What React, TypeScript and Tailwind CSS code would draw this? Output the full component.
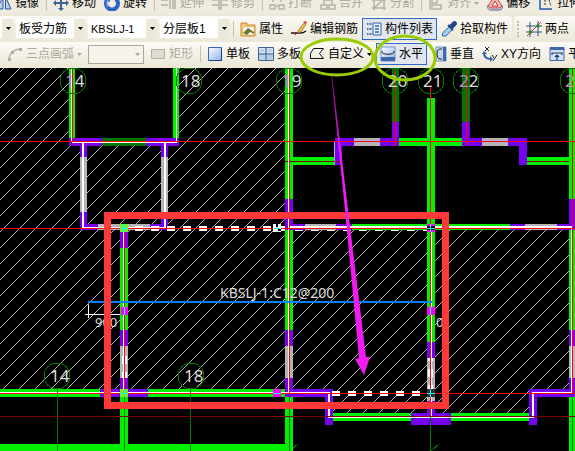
import type { ReactNode } from "react";

const FONT = "font-['Liberation_Sans','Noto_Sans_CJK_SC',sans-serif]";

function Icon({ children }: { children: ReactNode }) {
  return (
    <svg className="size-4 shrink-0" viewBox="0 0 16 16" fill="none" aria-hidden="true">
      {children}
    </svg>
  );
}

function Caret({ muted }: { muted?: boolean }) {
  return (
    <svg className="h-[3px] w-[5px] shrink-0" viewBox="0 0 5 3" aria-hidden="true">
      <path d="M0 0h5L2.5 3z" fill={muted ? "#aca899" : "#000"} />
    </svg>
  );
}

type ToolProps = {
  icon: ReactNode;
  label: string;
  disabled?: boolean;
  pressed?: boolean;
  menu?: boolean;
};

function Tool({ icon, label, disabled, pressed, menu }: ToolProps) {
  return (
    <button
      type="button"
      disabled={disabled}
      aria-pressed={pressed}
      className={`flex h-[22px] shrink-0 items-center gap-[3px] px-1 whitespace-nowrap ${
        pressed ? "bg-[#e1e6ee] outline outline-[#316ac5] -outline-offset-1" : ""
      } ${disabled ? "text-[#aca899]" : "text-black"}`}
    >
      <Icon>{icon}</Icon>
      <span>{label}</span>
      {menu && <Caret muted={disabled} />}
    </button>
  );
}

function Separator() {
  return (
    <div className="flex w-[6px] shrink-0 justify-center">
      <div className="h-4 w-px bg-[#c5c2b2]" />
    </div>
  );
}

type ComboProps = { label: string; value: string; narrow?: boolean; latin?: boolean };

function Combo({ label, value, narrow, latin }: ComboProps) {
  return (
    <div className={`relative h-[19px] shrink-0 ${narrow ? "w-4" : "w-[70px]"}`}>
      <select
        aria-label={label}
        defaultValue={value}
        className={`block h-full w-full appearance-none bg-white px-[3px] leading-[18px] text-black ${
          latin ? "text-[11px]" : "text-[12px]"
        }`}
      >
        <option>{value}</option>
      </select>
      <span className="pointer-events-none absolute inset-y-0 right-0 flex w-3 items-center justify-center bg-[#ece9d8]">
        <Caret />
      </span>
    </div>
  );
}

const BAR = "bg-linear-to-b from-[#fbfaf6] to-[#ece8d8]";

const icons = {
  mirror: (
    <>
      <path d="M7 2v12H1zM9.500 2v12H15z" fill="#b9d2f2" stroke="#28549c" />
    </>
  ),
  move: (
    <path
      d="M8 0l3 3H9v4h4V5l3 3-3 3V9H9v4h2l-3 3-3-3h2V9H3v2L0 8l3-3v2h4V3H5z"
      fill="#3d6392"
    />
  ),
  rotate: (
    <>
      <path d="M4 4a6 6 0 1 0 8 0" stroke="#2c62c4" strokeWidth="4" />
      <path d="M5 4.500a5 5 0 0 0-1 7" stroke="#8db8f3" strokeWidth="1.500" />
      <path d="M6 0v7L1 3z" fill="#2c62c4" />
    </>
  ),
  extend: <path d="M0 5h7M0 10h7M9 3v11M12 2v12M14 2v12" stroke="#b5b2a4" strokeWidth="1.500" />,
  trim: <path d="M0 5h6M0 10h6M10 5h6M10 10h6M7 1v14M9 1v14" stroke="#b5b2a4" strokeWidth="1.500" />,
  split: <path d="M4 7V4h3M12 7V4H9M1 10h5v4H1zM10 10h5v4h-5zM7 11h2" stroke="#b5b2a4" strokeWidth="1.500" />,
  merge: <path d="M4 9V5h8v4M1 10h6v4H1zM9 10h6v4H9z" stroke="#b5b2a4" strokeWidth="1.500" />,
  cut: <path d="M1 5h14M1 13h14M3 3v12M13 3v12M3 13L14 3" stroke="#b5b2a4" strokeWidth="1.500" />,
  align: <path d="M2 1v14M4 3h5v5H4zM4 10h9v4H4z" stroke="#b5b2a4" strokeWidth="1.500" />,
  offset: (
    <>
      <path d="M8 2c3 0 3 4 5 6s2 5-1 5H4c-3 0-3-3-1-5s2-6 5-6z" fill="#f4b6b0" stroke="#c33b32" />
      <path d="M8 6l3 5H5z" fill="#fff" stroke="#c33b32" />
      <path d="M1 10c-1 4 1 5 3 5h8c3 0 4-2 3-5" stroke="#2e62a8" />
    </>
  ),
  stretch: (
    <>
      <path d="M2 0v14h12" stroke="#2458a8" strokeWidth="1.500" />
      <path d="M7 5v5M10 2l3 9" stroke="#333" strokeDasharray="2 1" />
    </>
  ),
  props: (
    <>
      <path d="M1 2h6v2h8v11H1z" fill="#f6c976" stroke="#cf8b32" />
      <path d="M3 6h11v8H3z" fill="#fff" stroke="#c9a96a" strokeWidth=".5" />
      <path d="M3 12l5-5 6 4v2l-4-2-3 3z" fill="#6c7a2c" />
    </>
  ),
  pencil: (
    <>
      <path d="M0 12h7c3 0 4 1 8-2" stroke="#111" strokeWidth="1.500" />
      <path d="M7 10l6-8 2 1-5 8-3 1z" fill="#f0bd45" stroke="#9a6a1c" strokeWidth=".7" />
      <path d="M12 1l3 2 1-2-2-1z" fill="#d24a3a" />
      <path d="M1 11l4 3" stroke="#b33" />
    </>
  ),
  list: (
    <>
      <path d="M7 2h8v12H7z" fill="#e8f0fb" stroke="#3464ac" />
      <path d="M9 5h4M9 8h4M9 11h4" stroke="#3464ac" strokeWidth="1.500" />
      <path d="M1 3h3M1 8h3M1 13h3M4 3h2M4 8h2M4 13h2" stroke="#55719c" strokeWidth="2" strokeDasharray="1.500 1" />
    </>
  ),
  dropper: (
    <>
      <path d="M9 5l3 3-7 7H1.500v-3z" fill="#9fd0f5" stroke="#3d6fae" />
      <path d="M7 4l5 5M9 5l3-3c2-2 4 0 2 2l-3 3z" fill="#23467f" stroke="#23467f" strokeWidth="2" />
    </>
  ),
  twoPoint: (
    <>
      <path d="M4 1v15M12 0v15M0 5h16M0 11h16" stroke="#33557f" />
      <path d="M1 15L15 1" stroke="#d03030" />
      <circle cx="4.500" cy="11" r="1.800" fill="#2d8a2d" />
      <circle cx="12" cy="5" r="1.800" fill="#2d8a2d" />
    </>
  ),
  arc: (
    <>
      <path d="M2 14C2 7 7 3 14 3" stroke="#bab7aa" strokeWidth="1.500" />
      <path d="M1 12h3v3H1zM4 5h3v3H4zM12 2h3v3h-3z" fill="#b0ad9f" />
    </>
  ),
  rect: <path d="M1.500 3.500h13v9h-13z" fill="#dddbd2" stroke="#b5b2a4" />,
  slab: (
    <>
      <path d="M1.500 1.500h13v13h-13z" fill="url(#slabFill)" stroke="#3268bc" />
      <path d="M2 14.500h12.500V2" stroke="#1b3f86" />
    </>
  ),
  multi: (
    <>
      <path d="M.5 1.500h15v13H.5z" fill="#b8cfea" stroke="#41648f" />
      <path d="M8 1v14M0 8h16" stroke="#41648f" />
      <path d="M1.500 2.500h5v4h-5zM9.500 2.500h5v4h-5z" stroke="#dbe8f8" />
    </>
  ),
  custom: <path d="M4.500 2.500h10L10.500 7.500l4 5h-13v-5z" stroke="#111" />,
  horizontal: (
    <>
      <path d="M1 1h14v14H1z" fill="url(#slabFill)" stroke="#7396c6" />
      <path d="M1 11h14v4H1z" fill="#3f68a8" />
      <path d="M2 5v1c0 3 12 3 12 0V5" stroke="#222" />
    </>
  ),
  vertical: (
    <>
      <path d="M5 1h10v14H5z" fill="#c4d6f0" stroke="#7396c6" />
      <path d="M12 1h3v14h-3z" fill="#3f68a8" />
      <path d="M11 3H9c-4 0-4 10 0 10h2" stroke="#222" />
    </>
  ),
  xy: (
    <>
      <path d="M3 1l4 4M7 1L3 5M10 9l2 3M15 9l-4 6" stroke="#222" />
      <path d="M2 7c0 4 3 6 7 6" stroke="#2c62b4" strokeWidth="2" />
      <path d="M0 8l2-3 3 3zM8 10l3 3-3 3z" fill="#2c62b4" />
    </>
  ),
  parallel: (
    <>
      <path d="M1 1.500h14v13H1z" fill="#d6e3f6" stroke="#3f68a8" />
      <path d="M1 1h14v3H1z" fill="#3f68a8" />
      <path d="M3 9V7h10v2M8 14V9M6 11l2-2 2 2" stroke="#1d3d7a" strokeWidth="1.200" />
    </>
  ),
};

const GREEN = "#00f000";
const DARK = "#007800";
const PURPLE = "#7800f0";
const GRAY = "#b4b4b4";
const WHITE = "#ffffff";
const RED = "#ff0000";
const MAROON = "#800000";
const MAGENTA = "#ff00ff";
const CYAN = "#00ffff";

// x, y, width, height, fill
type Bar = [number, number, number, number, string];

const walls: Bar[] = [
  // stair shaft, upper left
  [69, 68, 6, 70, GREEN], [173, 68, 6, 70, GREEN],
  [69, 138, 110, 8, PURPLE], [102, 138, 44, 8, DARK],
  [71, 68, 1, 74, WHITE], [176, 68, 1, 74, WHITE], [72, 68, 1, 77, RED],
  [80, 146, 7, 11, PURPLE], [80, 157, 7, 55, GRAY], [80, 212, 7, 18, PURPLE],
  [161, 146, 7, 11, PURPLE], [161, 157, 7, 55, GRAY], [161, 212, 7, 18, PURPLE],
  [80, 224, 18, 6, PURPLE], [98, 224, 52, 6, GRAY], [150, 224, 18, 6, PURPLE],
  [72, 142, 105, 1, WHITE], [82, 142, 2, 86, WHITE], [164, 142, 2, 86, WHITE],
  [82, 227, 84, 1, WHITE],
  // long horizontal run, right half
  [285, 224, 20, 6, PURPLE], [305, 224, 31, 6, GRAY], [336, 224, 16, 6, PURPLE],
  [352, 224, 158, 6, GREEN], [510, 224, 15, 6, PURPLE], [525, 224, 32, 6, GRAY],
  [557, 224, 18, 6, PURPLE],
  // axis 19
  [285, 68, 8, 131, GREEN], [285, 199, 8, 31, PURPLE], [285, 230, 8, 100, GREEN],
  [285, 330, 8, 16, PURPLE], [285, 346, 8, 32, GRAY], [285, 378, 8, 18, PURPLE],
  [285, 397, 8, 54, GREEN], [289, 397, 1, 54, DARK],
  // upper right rooms
  [293, 157, 42, 8, GREEN], [335, 138, 7, 27, PURPLE], [334, 142, 1, 23, GRAY],
  [335, 138, 19, 8, PURPLE], [354, 138, 26, 8, GRAY], [380, 138, 19, 8, PURPLE],
  [399, 138, 63, 8, GREEN], [462, 138, 20, 8, PURPLE], [482, 138, 26, 8, GRAY],
  [508, 138, 19, 8, PURPLE], [519, 138, 8, 27, PURPLE], [527, 157, 42, 8, GREEN],
  [392, 68, 7, 54, DARK], [392, 122, 7, 24, PURPLE], [395, 68, 1, 78, RED],
  [462, 68, 8, 54, DARK], [462, 122, 8, 24, PURPLE], [466, 68, 1, 78, RED],
  [285, 161, 57, 1, MAROON], [527, 161, 48, 1, MAROON],
  // right edge
  [569, 68, 6, 131, GREEN], [569, 199, 6, 31, PURPLE], [569, 230, 6, 100, GREEN],
  [569, 330, 6, 16, PURPLE], [569, 346, 6, 32, GRAY], [569, 378, 6, 18, PURPLE],
  [569, 397, 6, 54, GREEN], [572, 397, 1, 54, DARK],
  // axis 21
  [427, 98, 8, 244, GREEN], [427, 342, 8, 16, PURPLE], [427, 358, 8, 43, GRAY],
  [427, 401, 8, 12, PURPLE],
  [288, 226, 284, 2, WHITE],
  // selected wall, left side
  [120, 232, 8, 16, PURPLE], [120, 248, 8, 82, GREEN], [120, 330, 8, 16, PURPLE],
  [120, 346, 8, 32, GRAY], [122, 356, 5, 8, WHITE], [122, 372, 5, 6, WHITE],
  [120, 378, 8, 12, PURPLE], [120, 397, 8, 54, GREEN], [124, 397, 1, 54, DARK],
  // lower run
  [0, 389, 100, 8, GREEN], [100, 389, 48, 8, PURPLE], [148, 389, 137, 8, GREEN],
  [285, 389, 48, 8, PURPLE], [325, 389, 8, 36, PURPLE], [333, 413, 78, 8, GREEN],
  [411, 413, 40, 12, PURPLE], [427, 409, 8, 4, PURPLE],
  [451, 413, 78, 8, GREEN], [529, 389, 8, 36, PURPLE],
  [529, 389, 46, 8, PURPLE],
  [0, 392, 329, 1, WHITE], [328, 392, 2, 26, WHITE], [328, 417, 206, 1, WHITE],
  [532, 392, 2, 26, WHITE], [532, 392, 40, 1, WHITE],
  [0, 444, 285, 7, GREEN], [124, 444, 1, 7, DARK],
  [57, 389, 1, 62, DARK], [190, 389, 1, 62, DARK],
  // wall centre lines
  [288, 68, 1, 325, WHITE], [289, 68, 1, 325, RED],
  [571, 228, 1, 165, WHITE], [572, 68, 1, 325, RED],
  [123, 228, 1, 162, WHITE], [124, 228, 1, 162, RED],
  [428, 358, 5, 3, WHITE], [428, 369, 5, 8, WHITE], [428, 385, 5, 4, WHITE],
  [431, 232, 1, 185, WHITE], [430, 86, 1, 330, RED], [430, 417, 1, 34, DARK],
  // reference axes
  [0, 141, 575, 1, RED], [0, 228, 575, 1, RED], [0, 393, 575, 1, RED],
  [0, 416, 575, 1, MAROON],
  // grips
  [120, 224, 8, 8, "#80f000"], [123, 224, 2, 8, CYAN], [120, 228, 8, 1, CYAN],
  [121, 307, 7, 8, MAGENTA], [124, 307, 1, 8, CYAN],
  [120, 389, 8, 8, "#80f000"], [124, 389, 1, 8, CYAN], [120, 393, 8, 1, CYAN],
  [273, 389, 8, 8, MAGENTA], [273, 393, 8, 1, CYAN],
  [427, 224, 8, 8, MAGENTA], [427, 226, 8, 4, "#000"], [430, 224, 1, 8, CYAN], [427, 228, 8, 1, CYAN],
  [427, 307, 8, 8, MAGENTA], [430, 307, 1, 8, CYAN],
  [427, 389, 8, 8, "#303030"], [430, 389, 1, 8, CYAN], [427, 393, 8, 1, CYAN],
  // rebar line
  [88, 301, 344, 2, "#0080ff"], [88, 303, 1, 2, "#ff8000"], [88, 305, 1, 13, WHITE],
  [85, 314, 35, 1, WHITE],
];

const midGrip: Bar[] = [
  [273, 224, 8, 8, WHITE], [276, 224, 2, 3, "#000"], [274, 228, 6, 1, CYAN], [278, 229, 3, 2, "#000"],
];

// label, circle centre x, circle centre y, text x, first digit lies on a wall
const axes: [string, number, number, number, boolean][] = [
  ["14", 73, 81, 65, true], ["18", 189, 81, 181, false], ["19", 289, 81, 282, true],
  ["20", 395, 81, 388, false], ["21", 431, 81, 423, false], ["22", 466, 81, 459, true],
  ["2", 573, 81, 565, true], ["14", 57, 376, 50, false], ["18", 191, 376, 184, false],
];

const hatchCells = Array.from({ length: 16 }, (_, i) => [i, (23 - i) % 16]);
const topDashes = Array.from({ length: 19 }, (_, i) => 135 + i * 16);
const lowDashes = Array.from({ length: 6 }, (_, i) => 332 + i * 16);

function Drawing() {
  return (
    <svg
      className="block min-h-0 w-full grow basis-[383px] bg-black font-['Noto_Sans',sans-serif]"
      viewBox="0 68 575 383"
      preserveAspectRatio="xMinYMin slice"
      role="img"
      aria-label="板受力筋平面图"
    >
      <defs>
        <pattern id="hatch" width="16" height="16" patternUnits="userSpaceOnUse">
          {hatchCells.map(([x, y]) => (
            <rect key={x} x={x} y={y} width="1" height="1" fill="#b8b8b8" />
          ))}
        </pattern>
      </defs>
      <g shapeRendering="crispEdges">
        <path d="M0 68H72V142H176V68H289V228H575V390H533V414H333V390H0z" fill="url(#hatch)" />
        <path d="M124 451l7-7M290 451l8-7M431 451l8-7" stroke={DARK} />
        {topDashes.map((x) => (
          <rect key={x} x={x} y="226" width="8" height="5" fill={WHITE} />
        ))}
        {walls.map(([x, y, width, height, fill], i) => (
          <rect key={i} x={x} y={y} width={width} height={height} fill={fill} />
        ))}
        {topDashes.slice(0, 9).map((x) => (
          <path key={x} d={`M${x} 226h8v2h-8zM${x} 229h8v2h-8z`} fill={WHITE} />
        ))}
        {midGrip.map(([x, y, width, height, fill], i) => (
          <rect key={i} x={x} y={y} width={width} height={height} fill={fill} />
        ))}
        {lowDashes.map((x) => (
          <path key={x} d={`M${x} 391h8v2h-8zM${x} 394h8v2h-8z`} fill={WHITE} />
        ))}
        {axes.map(([, cx, cy], i) => (
          <circle key={i} cx={cx} cy={cy} r="13" fill="none" stroke={DARK} />
        ))}
      </g>
      {axes.map(([label, , cy, x, onWall], i) => (
        <text key={i} x={x} y={cy + 6} fontSize="17" fill="#dcdcdc">
          <tspan fill={onWall ? "#d878d0" : "#dcdcdc"}>{label[0]}</tspan>
          {label.slice(1)}
        </text>
      ))}
      <text x="220" y="298" fontSize="14" fill="#dcdcdc">
        KBSLJ-1:C12@200
      </text>
      <text x="95" y="327" fontSize="13" fill="#dcdcdc">
        900
      </text>
      <text x="436" y="327" fontSize="13" fill="#dcdcdc">
        0
      </text>
    </svg>
  );
}

function Annotations() {
  return (
    <svg
      className="pointer-events-none absolute inset-0 size-full"
      viewBox="0 0 575 451"
      preserveAspectRatio="xMinYMin slice"
      fill="none"
      aria-hidden="true"
    >
      <defs>
        <linearGradient id="arrowFade" x1="0" y1="74" x2="0" y2="160" gradientUnits="userSpaceOnUse">
          <stop offset="0" stopColor="#f31bf3" stopOpacity=".45" />
          <stop offset="1" stopColor="#f31bf3" />
        </linearGradient>
        <linearGradient id="slabFill" x1="0" y1="0" x2="1" y2="1">
          <stop offset="0" stopColor="#ffffff" />
          <stop offset="1" stopColor="#8fb0ea" />
        </linearGradient>
      </defs>
      <rect x="107.500" y="215.500" width="338" height="190" stroke="#ff3838" strokeWidth="7" />
      <path d="M331 74h1L348 210L366 357L370 357L364 375L355 359L359 358L345 210z" fill="url(#arrowFade)" />
      <ellipse cx="337" cy="57" rx="36" ry="18" stroke="#99cc00" strokeWidth="3" />
      <ellipse cx="405" cy="58" rx="30" ry="22" stroke="#99cc00" strokeWidth="3" />
    </svg>
  );
}

export default function App() {
  return (
    <div className={`relative flex min-h-screen flex-col overflow-hidden bg-[#ece9d8] text-[12px] leading-4 ${FONT}`}>
      <div className="flex h-[14px] items-end overflow-hidden bg-[#efecdf]">
        <div className="-ml-2 flex items-center">
          <Tool icon={icons.mirror} label="镜像" />
          <Separator />
          <Tool icon={icons.move} label="移动" />
          <Tool icon={icons.rotate} label="旋转" />
          <Separator />
          <Tool icon={icons.extend} label="延伸" disabled />
          <Tool icon={icons.trim} label="修剪" disabled />
          <Separator />
          <Tool icon={icons.split} label="打断" disabled />
          <Tool icon={icons.merge} label="合并" disabled />
          <Tool icon={icons.cut} label="分割" disabled />
          <Separator />
          <Tool icon={icons.align} label="对齐" disabled menu />
          <Tool icon={icons.offset} label="偏移" />
          <Tool icon={icons.stretch} label="拉伸" />
        </div>
      </div>

      <div className="flex h-[27px] overflow-hidden pt-0.5">
        <div className={`flex shrink-0 items-center rounded-r-sm ${BAR}`}>
          <div className="-ml-0.5 flex gap-0.5">
            <Combo label="楼层" value="" narrow />
            <Combo label="构件类型" value="板受力筋" />
            <Combo label="构件" value="KBSLJ-1" latin />
            <Combo label="分层" value="分层板1" />
          </div>
          <Separator />
          <Tool icon={icons.props} label="属性" />
          <Tool icon={icons.pencil} label="编辑钢筋" />
          <Tool icon={icons.list} label="构件列表" pressed />
          <Tool icon={icons.dropper} label="拾取构件" />
        </div>
        <div className={`ml-0.5 flex grow items-center rounded-l-sm ${BAR}`}>
          <div className="mx-[3px] h-4 shrink-0 border-l-2 border-dotted border-[#c1beb0]" />
          <Tool icon={icons.twoPoint} label="两点" />
        </div>
      </div>

      <div className="flex h-[27px] overflow-hidden pt-px pb-0.5">
        <div className={`flex grow items-center pl-[3px] ${BAR}`}>
          <Tool icon={icons.arc} label="三点画弧" disabled menu />
          <div className="relative mx-0.5 h-[19px] w-[56px] shrink-0">
            <select
              aria-label="画弧方式"
              disabled
              className="block h-full w-full appearance-none border border-[#aca899] bg-[#f5f3eb]"
            />
            <span className="pointer-events-none absolute inset-y-0 right-1 flex items-center">
              <Caret muted />
            </span>
          </div>
          <Tool icon={icons.rect} label="矩形" disabled />
          <Separator />
          <Tool icon={icons.slab} label="单板" />
          <Tool icon={icons.multi} label="多板" />
          <Tool icon={icons.custom} label="自定义" menu />
          <Tool icon={icons.horizontal} label="水平" pressed />
          <Tool icon={icons.vertical} label="垂直" />
          <Tool icon={icons.xy} label="XY方向" />
          <Tool icon={icons.parallel} label="平行" />
        </div>
      </div>

      <Drawing />
      <Annotations />
    </div>
  );
}
